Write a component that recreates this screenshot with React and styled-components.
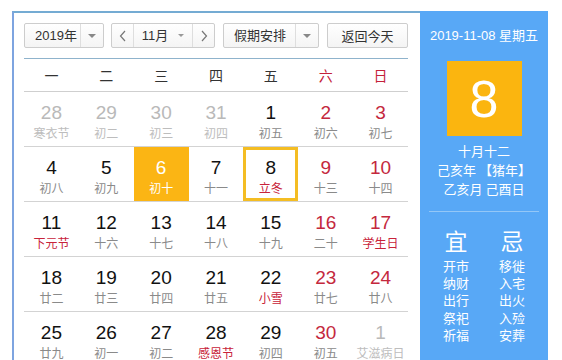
import React from "react";
import styled, { createGlobalStyle } from "styled-components";

const GlobalStyle = createGlobalStyle`
  body {
    margin: 0;
    background: #fff;
    overflow: hidden;
    font-family: "Liberation Sans", "Noto Sans CJK SC", sans-serif;
  }
`;

const weekdays = ["一", "二", "三", "四", "五", "六", "日"];

// n: 数字, l: 农历/节日, o: 非本月, f: 节日(红字), s: 选中, t: 今天
const rows = [
  [
    { n: 28, l: "寒衣节", o: true },
    { n: 29, l: "初二", o: true },
    { n: 30, l: "初三", o: true },
    { n: 31, l: "初四", o: true },
    { n: 1, l: "初五" },
    { n: 2, l: "初六" },
    { n: 3, l: "初七" },
  ],
  [
    { n: 4, l: "初八" },
    { n: 5, l: "初九" },
    { n: 6, l: "初十", s: true },
    { n: 7, l: "十一" },
    { n: 8, l: "立冬", f: true, t: true },
    { n: 9, l: "十三" },
    { n: 10, l: "十四" },
  ],
  [
    { n: 11, l: "下元节", f: true },
    { n: 12, l: "十六" },
    { n: 13, l: "十七" },
    { n: 14, l: "十八" },
    { n: 15, l: "十九" },
    { n: 16, l: "二十" },
    { n: 17, l: "学生日", f: true },
  ],
  [
    { n: 18, l: "廿二" },
    { n: 19, l: "廿三" },
    { n: 20, l: "廿四" },
    { n: 21, l: "廿五" },
    { n: 22, l: "小雪", f: true },
    { n: 23, l: "廿七" },
    { n: 24, l: "廿八" },
  ],
  [
    { n: 25, l: "廿九" },
    { n: 26, l: "初一" },
    { n: 27, l: "初二" },
    { n: 28, l: "感恩节", f: true },
    { n: 29, l: "初四" },
    { n: 30, l: "初五" },
    { n: 1, l: "艾滋病日", o: true },
  ],
];

const yi = ["开市", "纳财", "出行", "祭祀", "祈福"];
const ji = ["移徙", "入宅", "出火", "入殓", "安葬"];

const Chevron = ({ dir }) => (
  <svg width="8" height="12" viewBox="0 0 8 12">
    <polyline
      points={dir === "left" ? "6,1 1.5,6 6,11" : "2,1 6.5,6 2,11"}
      fill="none"
      stroke="#777"
      strokeWidth="1.2"
    />
  </svg>
);

const App = () => {
  return (
    <>
      <GlobalStyle />
      <Page>
        <Main>
          <Toolbar>
            <Select width={80}>
              <SelectText>2019年</SelectText>
              <ArrowBox>
                <Caret />
              </ArrowBox>
            </Select>
            <Select width={104}>
              <NavButton>
                <Chevron dir="left" />
              </NavButton>
              <SelectText center>
                11月
                <InlineCaret />
              </SelectText>
              <NavButton right>
                <Chevron dir="right" />
              </NavButton>
            </Select>
            <Select width={96}>
              <SelectText>假期安排</SelectText>
              <ArrowBox>
                <Caret />
              </ArrowBox>
            </Select>
            <TodayButton>返回今天</TodayButton>
          </Toolbar>

          <WeekHeader>
            {weekdays.map((w, i) => (
              <WeekDay key={w} weekend={i >= 5}>
                {w}
              </WeekDay>
            ))}
          </WeekHeader>

          {rows.map((row, ri) => (
            <Row key={ri}>
              {row.map((d, i) => (
                <Cell key={i} selected={d.s} today={d.t}>
                  <DayNum other={d.o} weekend={i >= 5} selected={d.s}>
                    {d.n}
                  </DayNum>
                  <Lunar other={d.o} festival={d.f} selected={d.s}>
                    {d.l}
                  </Lunar>
                </Cell>
              ))}
            </Row>
          ))}
        </Main>

        <Side>
          <SideDate>2019-11-08 星期五</SideDate>
          <BigDay>8</BigDay>
          <LunarInfo>
            <div>十月十二</div>
            <div>己亥年 【猪年】</div>
            <div>乙亥月 己酉日</div>
          </LunarInfo>
          <SideDivider />
          <Almanac>
            <AlmanacCol>
              <AlmanacTitle>宜</AlmanacTitle>
              {yi.map((t) => (
                <AlmanacItem key={t}>{t}</AlmanacItem>
              ))}
            </AlmanacCol>
            <AlmanacCol>
              <AlmanacTitle>忌</AlmanacTitle>
              {ji.map((t) => (
                <AlmanacItem key={t}>{t}</AlmanacItem>
              ))}
            </AlmanacCol>
          </Almanac>
        </Side>
      </Page>
    </>
  );
};

export default App;

const Page = styled.div`
  display: flex;
  padding: 11px 0 0 12px;
  height: 360px;
  box-sizing: border-box;
`;

const Main = styled.div`
  width: 408px;
  box-sizing: border-box;
  border-top: 2px solid #74abd3;
  border-left: 2px solid #7ea4e0;
  padding: 10px 12px 0 10px;
`;

const Toolbar = styled.div`
  display: flex;
  gap: 8px;
  height: 25px;

  & > :first-child {
    margin-right: -1px;
  }
`;

const Select = styled.div`
  display: flex;
  width: ${(p) => p.width}px;
  height: 25px;
  box-sizing: border-box;
  border: 1px solid #cdcdcd;
  border-radius: 2px;
  background: linear-gradient(#ffffff, #f4f4f4);
  font-family: "Liberation Sans", "Noto Sans CJK SC", sans-serif;
  font-size: 13px;
  color: #333;
`;

const SelectText = styled.div`
  flex: 1;
  display: flex;
  align-items: center;
  justify-content: ${(p) => (p.center ? "center" : "flex-start")};
  padding-left: ${(p) => (p.center ? "0" : "10px")};
  gap: 10px;
  line-height: 1;
`;

const ArrowBox = styled.div`
  width: 22px;
  border-left: 1px solid #dedede;
  display: flex;
  align-items: center;
  justify-content: center;
`;

const Caret = styled.span`
  width: 0;
  height: 0;
  border-left: 4px solid transparent;
  border-right: 4px solid transparent;
  border-top: 4px solid #888;
`;

const InlineCaret = styled(Caret)`
  border-left-width: 3.5px;
  border-right-width: 3.5px;
  border-top-width: 3.5px;
  border-top-color: #999;
`;

const NavButton = styled.div`
  width: 21px;
  display: flex;
  align-items: center;
  justify-content: center;
  border-left: ${(p) => (p.right ? "1px solid #dedede" : "none")};
  border-right: ${(p) => (p.right ? "none" : "1px solid #dedede")};
`;

const TodayButton = styled.div`
  width: 81px;
  height: 25px;
  box-sizing: border-box;
  border: 1px solid #cdcdcd;
  border-radius: 2px;
  background: linear-gradient(#ffffff, #f4f4f4);
  display: flex;
  align-items: center;
  justify-content: center;
  font-family: "Noto Sans CJK SC", sans-serif;
  font-size: 13px;
  color: #333;
`;

const WeekHeader = styled.div`
  display: grid;
  grid-template-columns: repeat(7, 1fr);
  margin-top: 10px;
  height: 32px;
  border-top: 1px solid #8fb3cc;
  border-bottom: 1px solid #cfcfcf;
  align-items: center;
`;

const WeekDay = styled.div`
  text-align: center;
  font-family: "Noto Sans CJK SC", sans-serif;
  font-size: 14px;
  color: ${(p) => (p.weekend ? "#c4213a" : "#333")};
`;

const Row = styled.div`
  display: grid;
  grid-template-columns: repeat(7, 1fr);
  height: 55px;
  box-sizing: border-box;
  border-bottom: 1px solid #d3d3d3;
`;

const Cell = styled.div`
  display: flex;
  flex-direction: column;
  align-items: center;
  box-sizing: border-box;
  padding-top: ${(p) => (p.today ? "8px" : "11px")};
  background: ${(p) => (p.selected ? "#fbb514" : "transparent")};
  border: ${(p) => (p.today ? "3px solid #f4bd23" : "none")};
`;

const DayNum = styled.div`
  font-family: "Liberation Sans", sans-serif;
  font-size: 19px;
  line-height: 20px;
  color: ${(p) =>
    p.selected ? "#fff" : p.other ? "#b9b9b9" : p.weekend ? "#c4283d" : "#111"};
`;

const Lunar = styled.div`
  margin-top: 2px;
  font-family: "Noto Sans CJK SC", sans-serif;
  font-size: 12px;
  line-height: 16px;
  color: ${(p) =>
    p.selected
      ? "#fff"
      : p.other
      ? "#bdbdbd"
      : p.festival
      ? "#c8233a"
      : "#8a8a8a"};
`;

const Side = styled.div`
  width: 128px;
  background: #58a8f6;
  color: #fff;
  display: flex;
  flex-direction: column;
  align-items: center;
  font-family: "Noto Sans CJK SC", sans-serif;
`;

const SideDate = styled.div`
  margin-top: 16px;
  font-family: "Liberation Sans", "Noto Sans CJK SC", sans-serif;
  font-size: 13px;
  line-height: 18px;
`;

const BigDay = styled.div`
  margin-top: 16px;
  width: 75px;
  height: 75px;
  background: #fbb50f;
  display: flex;
  align-items: center;
  justify-content: center;
  font-family: "Liberation Sans", sans-serif;
  font-size: 52px;
  color: #fff;
`;

const LunarInfo = styled.div`
  margin-top: 5px;
  font-size: 13px;
  line-height: 19px;
  text-align: center;
`;

const SideDivider = styled.div`
  width: 110px;
  height: 1px;
  background: #93c7f7;
  margin-top: 13px;
`;

const Almanac = styled.div`
  display: flex;
  gap: 30px;
  margin-top: 15px;
`;

const AlmanacCol = styled.div`
  display: flex;
  flex-direction: column;
  align-items: center;
`;

const AlmanacTitle = styled.div`
  font-size: 23px;
  line-height: 26px;
  margin-bottom: 4px;
`;

const AlmanacItem = styled.div`
  font-size: 13px;
  line-height: 17.2px;
`;
